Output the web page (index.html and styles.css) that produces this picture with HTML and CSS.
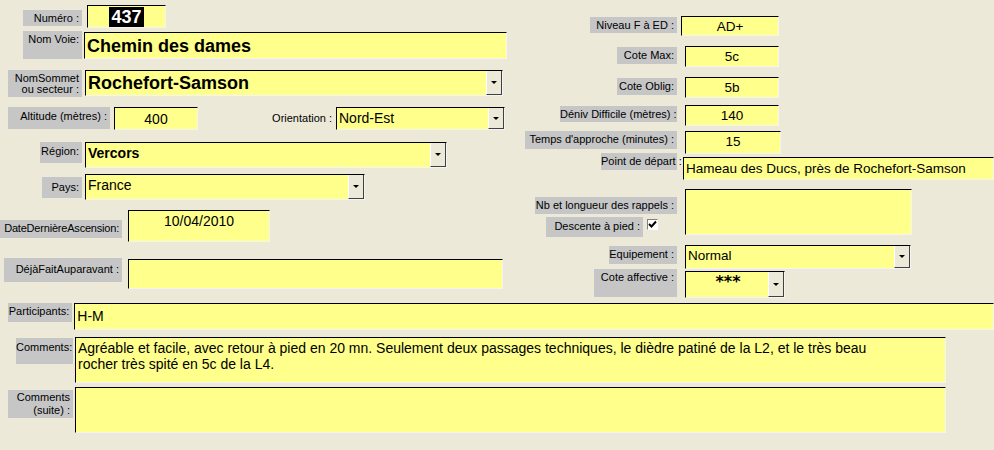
FILE: index.html
```html
<!DOCTYPE html>
<html>
<head>
<meta charset="utf-8">
<title>Voie 437</title>
<link rel="stylesheet" href="styles.css">
</head>
<body>

<div class="form">

   <div class="top">

      <!-- left column of the form -->
      <div class="col-left">

         <div class="row r-numero">
            <div class="lbl l-numero">Numéro :</div>
            <div class="fld f-numero"><span class="sel">437</span></div>
         </div>

         <div class="row r-voie">
            <div class="lbl l-voie">Nom Voie:</div>
            <div class="fld big f-voie">Chemin des dames</div>
         </div>

         <div class="row r-sommet">
            <div class="lbl l-sommet">NomSommet<br>ou secteur :</div>
            <div class="fld big combo f-sommet"><span class="val">Rochefort-Samson</span><span class="drop"></span></div>
         </div>

         <div class="row r-alt">
            <div class="lbl l-alt">Altitude (mètres) :</div>
            <div class="fld center f-alt">400</div>
            <div class="plain l-orient">Orientation :</div>
            <div class="fld combo f-orient"><span class="val">Nord-Est</span><span class="drop"></span></div>
         </div>

         <div class="row r-region">
            <div class="lbl l-region">Région:</div>
            <div class="fld combo bold f-region"><span class="val">Vercors</span><span class="drop"></span></div>
         </div>

         <div class="row r-pays">
            <div class="lbl l-pays">Pays:</div>
            <div class="fld combo f-pays"><span class="val">France</span><span class="drop"></span></div>
         </div>

         <div class="row r-date">
            <div class="lbl l-date">DateDernièreAscension:</div>
            <div class="fld center f-date">10/04/2010</div>
         </div>

         <div class="row r-deja">
            <div class="lbl l-deja">DéjàFaitAuparavant :</div>
            <div class="fld f-deja"></div>
         </div>

      </div> <!-- end of col-left -->

      <!-- right column of the form -->
      <div class="col-right">

         <div class="row r-niveau">
            <div class="lbl l-niveau">Niveau F à ED :</div>
            <div class="fld small center f-niveau">AD+</div>
         </div>

         <div class="row r-cmax">
            <div class="lbl l-cote">Cote Max:</div>
            <div class="fld small center f-cote">5c</div>
         </div>

         <div class="row r-coblig">
            <div class="lbl l-cote">Cote Oblig:</div>
            <div class="fld small center f-cote">5b</div>
         </div>

         <div class="row r-deniv">
            <div class="lbl l-deniv">Déniv Difficile (mètres) :</div>
            <div class="fld small center f-cote">140</div>
         </div>

         <div class="row r-temps">
            <div class="lbl l-temps">Temps d'approche (minutes) :</div>
            <div class="fld small center f-temps">15</div>
         </div>

         <div class="row r-depart">
            <div class="lbl l-depart">Point de départ :</div>
            <div class="fld small f-depart">Hameau des Ducs, près de Rochefort-Samson</div>
         </div>

         <div class="row r-rappels">
            <div class="stack">
               <div class="lbl l-rappels">Nb et longueur des rappels :</div>
               <div class="descente">
                  <div class="lbl l-descente">Descente à pied :</div>
                  <div class="check">
                     <svg width="9" height="9" viewBox="0 0 9 9"><path d="M1 4 L3.5 6.5 L8 1.5" fill="none" stroke="#000" stroke-width="2"/></svg>
                  </div>
               </div>
            </div>
            <div class="fld small f-rappels"></div>
         </div>

         <div class="row r-equip">
            <div class="lbl l-equip">Equipement :</div>
            <div class="fld small combo f-equip"><span class="val">Normal</span><span class="drop"></span></div>
         </div>

         <div class="row r-affect">
            <div class="lbl l-affect">Cote affective :</div>
            <div class="fld small combo f-affect"><span class="val stars">***</span><span class="drop"></span></div>
         </div>

      </div> <!-- end of col-right -->

   </div> <!-- end of top -->

   <div class="bottom">

      <div class="row r-part">
         <div class="lbl l-part">Participants:</div>
         <div class="fld f-part">H-M</div>
      </div>

      <div class="row r-comm">
         <div class="lbl l-comm">Comments:</div>
         <div class="fld f-comm">Agréable et facile, avec retour à pied en 20 mn. Seulement deux passages techniques, le dièdre patiné de la L2, et le très beau rocher très spité en 5c de la L4.</div>
      </div>

      <div class="row r-suite">
         <div class="lbl l-suite">Comments<br>(suite) :</div>
         <div class="fld f-comm"></div>
      </div>

   </div> <!-- end of bottom -->

</div>

</body>
</html>
```

FILE: styles.css
```css
html, body
{
   margin: 0 ;
   padding: 0 ;
   background-color: #ece9d8 ;   /* XP window colour */
   overflow: hidden ;
}

.form
{
   width: 994px ;
   height: 450px ;
   font-family: "Liberation Sans", Arial, sans-serif ;
   color: #000 ;
}

.top
{
   display: flex ;
   height: 300px ;
}

.col-left  { width: 520px ; }
.col-right { width: 474px ; }

.row
{
   display: flex ;
   align-items: flex-start ;
}

/* grey labels, text at the top right */
.lbl
{
   background-color: #c6c6c6 ;
   text-align: right ;
   font-size: 11px ;
   line-height: 13px ;
   padding: 2px 3px 0 0 ;
   box-sizing: border-box ;
   white-space: nowrap ;
}

.plain
{
   font-size: 11px ;
   line-height: 13px ;
   text-align: right ;
}

/* yellow sunken text boxes */
.fld
{
   background-color: #ffff8c ;
   border: 1px solid ;
   border-color: #000 #f4f4f4 #f4f4f4 #000 ;
   box-sizing: border-box ;
   font-size: 14px ;
   line-height: 18px ;
   padding: 1px 0 0 2px ;
   overflow: hidden ;
   white-space: nowrap ;
}

.big   { font-size: 18px ; font-weight: bold ; line-height: 22px ; padding-top: 1px ; }
.bold  { font-weight: bold ; }
.small { font-size: 13.5px ; line-height: 17px ; }
.center { text-align: center ; padding-left: 0 ; }

.combo
{
   display: flex ;
   padding: 0 ;
}

.combo .val
{
   flex: 1 ;
   padding: 1px 0 0 2px ;
}

.drop
{
   width: 16px ;
   background-color: #ece9d8 ;
   border-left: 1px solid #fff ;
   border-right: 1px solid #404040 ;
   border-bottom: 1px solid #404040 ;
   box-sizing: border-box ;
   display: flex ;
   align-items: center ;
   justify-content: center ;
}

.drop::after
{
   content: "" ;
   border-left: 3px solid transparent ;
   border-right: 3px solid transparent ;
   border-top: 3px solid #000 ;
}

/* ---- left column ---- */

.r-numero { margin-top: 5px ; }
.l-numero { margin: 5px 0 0 23px ; width: 59px ; height: 16px ; }
.f-numero
{
   margin-left: 5px ; width: 79px ; height: 23px ;
   font-size: 18px ; font-weight: bold ; line-height: 16px ;
   text-align: center ; padding: 3px 0 0 0 ;
}
.sel
{
   background-color: #000 ;
   color: #fff ;
   padding: 0 2px ;
}

.r-voie { margin-top: 3px ; }
.l-voie { margin-left: 23px ; width: 59px ; height: 28px ; }
.f-voie { margin: 1px 0 0 2px ; width: 423px ; height: 27px ; padding-top: 2px ; }

.r-sommet { margin-top: 11px ; }
.l-sommet { margin-left: 8px ; width: 74px ; height: 27px ; line-height: 11px ; padding-top: 3px ; }
.f-sommet { margin-left: 3px ; width: 418px ; height: 26px ; }
.f-sommet .val { padding-top: 1px ; }

.r-alt { margin-top: 10px ; }
.l-alt { margin-left: 8px ; width: 102px ; height: 22px ; padding-top: 3px ; }
.f-alt { margin-left: 4px ; width: 84px ; height: 23px ; padding-top: 2px ; }
.l-orient { margin: 5px 0 0 70px ; width: 64px ; }
.f-orient { margin-left: 4px ; width: 169px ; height: 23px ; }

.r-region { margin-top: 12px ; }
.l-region { margin-left: 40px ; width: 42px ; height: 21px ; padding-top: 3px ; }
.f-region { margin-left: 3px ; width: 362px ; height: 26px ; }

.r-pays { margin-top: 6px ; }
.l-pays { margin: 3px 0 0 42px ; width: 40px ; height: 21px ; padding-top: 4px ; }
.f-pays { margin-left: 3px ; width: 280px ; height: 26px ; }

.r-date { margin-top: 10px ; }
.l-date { margin-top: 10px ; width: 122px ; height: 18px ; letter-spacing: -0.2px ; }
.f-date { margin-left: 6px ; width: 142px ; height: 32px ; }

.r-deja { margin-top: 16px ; }
.l-deja { margin-left: 4px ; width: 118px ; height: 24px ; padding-top: 5px ; }
.f-deja { margin: 1px 0 0 6px ; width: 375px ; height: 30px ; }

/* ---- right column ---- */

.r-niveau { margin-top: 16px ; }
.l-niveau { margin: 1px 0 0 70px ; width: 87px ; height: 16px ; }
.f-niveau { margin-left: 4px ; width: 98px ; height: 20px ; }

.r-cmax   { margin-top: 10px ; }
.r-coblig { margin-top: 10px ; }
.l-cote   { margin: 1px 0 0 97px ; width: 60px ; height: 17px ; }
.f-cote   { margin-left: 8px ; width: 94px ; height: 21px ; }

.r-deniv { margin-top: 7px ; }
.l-deniv { margin: 1px 0 0 40px ; width: 117px ; height: 16px ; }

.r-temps { margin-top: 5px ; }
.l-temps { margin-left: 5px ; width: 152px ; height: 18px ; }
.f-temps { margin-left: 8px ; width: 96px ; height: 23px ; }

.r-depart { margin-top: -1px ; }
.l-depart { margin-left: 81px ; width: 76px ; height: 17px ; padding-right: 2px ; }
.f-depart { margin: 4px 0 0 6px ; width: 320px ; height: 23px ; padding-top: 2px ; }

.r-rappels { margin-top: 9px ; }
.stack { margin-left: 15px ; width: 142px ; }
.l-rappels { margin-top: 8px ; width: 142px ; height: 17px ; }
.descente { display: flex ; align-items: flex-start ; margin-top: 3px ; }
.l-descente { margin-left: 11px ; width: 97px ; height: 20px ; padding-top: 3px ; }
.check
{
   margin: 2px 0 0 4px ;
   width: 11px ;
   height: 11px ;
   background-color: #fff ;
   border: 1px solid ;
   border-color: #808080 #fff #fff #808080 ;
   box-sizing: border-box ;
   display: flex ;
   align-items: center ;
   justify-content: center ;
}
.f-rappels { margin-left: 8px ; width: 227px ; height: 46px ; }

.r-equip { margin-top: 8px ; }
.l-equip { margin: 1px 0 0 89px ; width: 68px ; height: 18px ; }
.f-equip { margin-left: 8px ; width: 226px ; height: 24px ; }

.r-affect { margin-top: 0 ; }
.l-affect { margin-left: 74px ; width: 83px ; height: 28px ; }
.f-affect { margin: 2px 0 0 8px ; width: 100px ; height: 27px ; }
.stars
{
   text-align: center ;
   font-family: "DejaVu Sans", sans-serif ;
   font-weight: bold ; font-size: 16px ; line-height: 17px ;
   padding-top: 6px ; letter-spacing: 0 ;
}

/* ---- bottom rows ---- */

.r-part { margin-top: 3px ; }
.l-part { margin-left: 8px ; width: 65px ; height: 19px ; }
.f-part { margin-left: 2px ; width: 930px ; height: 27px ; padding-top: 3px ; }

.r-comm { margin-top: 7px ; }
.l-comm { margin: 1px 0 0 16px ; width: 57px ; height: 26px ; padding-top: 3px ; }
.f-comm
{
   margin-left: 2px ; width: 871px ; height: 46px ;
   white-space: normal ; line-height: 16px ; padding: 2px 40px 0 2px ;
}

.r-suite { margin-top: 4px ; }
.l-suite { margin: 3px 0 0 8px ; width: 65px ; height: 28px ; line-height: 13px ; padding-top: 1px ; }
```
